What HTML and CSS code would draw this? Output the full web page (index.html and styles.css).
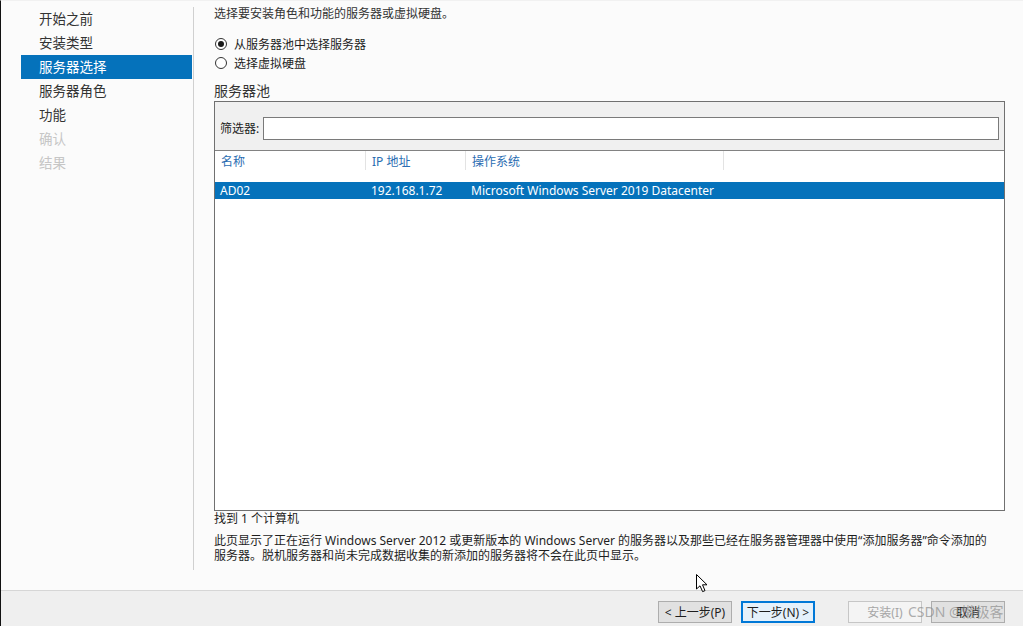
FILE: index.html
```html
<!DOCTYPE html>
<html lang="zh-CN">
<head>
  <meta charset="UTF-8" />
  <title>添加角色和功能向导</title>
  <link rel="stylesheet" href="styles.css">
</head>
<body>
  <div class="window">
    <div class="main">
      <div class="sidebar">
        <ul class="steps">
          <li>开始之前</li>
          <li>安装类型</li>
          <li class="active">服务器选择</li>
          <li>服务器角色</li>
          <li>功能</li>
          <li class="disabled">确认</li>
          <li class="disabled">结果</li>
        </ul>
      </div>

      <div class="content">
        <p class="intro">选择要安装角色和功能的服务器或虚拟硬盘。</p>
        <div class="radios">
          <label class="radio checked"><span class="dot"></span>从服务器池中选择服务器</label>
          <label class="radio"><span class="dot"></span>选择虚拟硬盘</label>
        </div>

        <h3 class="pool-title">服务器池</h3>
        <div class="pool">
          <div class="filter">
            <span class="filter-label">筛选器:</span>
            <div class="filter-input"></div>
          </div>
          <div class="grid head">
            <div class="cell">名称</div>
            <div class="cell">IP 地址</div>
            <div class="cell">操作系统</div>
            <div class="cell last"></div>
          </div>
          <div class="grid row selected">
            <div class="cell">AD02</div>
            <div class="cell">192.168.1.72</div>
            <div class="cell">Microsoft Windows Server 2019 Datacenter</div>
            <div class="cell"></div>
          </div>
        </div>

        <p class="found">找到 1 个计算机</p>
        <p class="note">此页显示了正在运行 Windows Server 2012 或更新版本的 Windows Server 的服务器以及那些已经在服务器管理器中使用“添加服务器”命令添加的<br>服务器。脱机服务器和尚未完成数据收集的新添加的服务器将不会在此页中显示。</p>
      </div>
    </div>

    <div class="footer">
      <button class="btn">&lt; 上一步(P)</button>
      <button class="btn primary">下一步(N) &gt;</button>
      <button class="btn disabled install">安装(I)</button>
      <button class="btn">取消</button>
    </div>

    <svg class="cursor" width="14" height="20" viewBox="0 0 14 20">
      <path d="M1.5 1.5 L1.5 16 L5 12.8 L7.6 18.6 L10 17.6 L7.5 11.8 L12 11.8 Z" fill="#fff" stroke="#000" stroke-width="1" stroke-linejoin="miter"/>
    </svg>
    <span class="watermark">CSDN @懒极客</span>
  </div>
</body>
</html>
```

FILE: styles.css
```css
* {
  box-sizing: border-box;
}
html, body {
  margin: 0;
  padding: 0;
}
body {
  font-family: "Noto Sans", "Noto Sans CJK SC", sans-serif;
  font-size: 12px;
  color: #1e1e1e;
  background: #fbfbfb;
}
.window {
  position: relative;
  width: 1023px;
  height: 626px;
  border-left: 1px solid #111;
  border-top: 1px solid #f1f1f1;
  background: #fbfbfb;
  display: flex;
  flex-direction: column;
  overflow: hidden;
}
.main {
  flex: 1;
  display: flex;
}

/* 左侧步骤 */
.sidebar {
  padding: 6px 0 20px 20px;
  display: flex;
}
.steps {
  list-style: none;
  margin: 0;
  padding: 0 1px 0 0;
  width: 173px;
  border-right: 1px solid #d0d0d0;
  font-size: 13.5px;
}
.steps li {
  height: 24px;
  line-height: 24px;
  padding-left: 18px;
  color: #333;
}
.steps li.active {
  background: #0572bb;
  color: #fff;
}
.steps li.disabled {
  color: #c6c6c6;
}

/* 右侧内容 */
.content {
  flex: 1;
  padding: 6px 18px 0 20px;
  display: flex;
  flex-direction: column;
}
.intro {
  margin: 0;
  line-height: 14px;
  color: #333;
}
.radios {
  margin-top: 13px;
  display: flex;
  flex-direction: column;
}
.radio {
  display: flex;
  align-items: center;
  height: 19px;
  color: #1e1e1e;
}
.dot {
  width: 12px;
  height: 12px;
  border: 1px solid #333;
  border-radius: 50%;
  margin: 0 7px 0 1px;
  display: flex;
  align-items: center;
  justify-content: center;
  background: #fff;
}
.radio.checked .dot::after {
  content: "";
  width: 6px;
  height: 6px;
  border-radius: 50%;
  background: #1a1a1a;
}
.pool-title {
  margin: 10px 0 1px;
  font-size: 14px;
  font-weight: normal;
  line-height: 18px;
  color: #333;
}
.pool {
  height: 410px;
  border: 1px solid #707070;
  background: #fff;
}
.filter {
  height: 49px;
  background: #f0f0f0;
  border-bottom: 1px solid #828282;
  display: flex;
  align-items: flex-start;
  padding: 15px 5px 0 5px;
}
.filter-label {
  line-height: 23px;
  margin-right: 4px;
  color: #1e1e1e;
}
.filter-input {
  flex: 1;
  height: 23px;
  border: 1px solid #7a7a7a;
  background: #fff;
}
.grid {
  display: grid;
  grid-template-columns: 151px 100px 258px 1fr;
}
.head {
  height: 19px;
  margin-bottom: 12px;
}
.head .cell {
  border-right: 1px solid #e3e3e3;
  color: #2a6db2;
  line-height: 16px;
  padding: 3px 0 0 6px;
}
.head .cell.last {
  border-right: none;
}
.row .cell {
  line-height: 17px;
  height: 17px;
  padding-left: 5px;
  white-space: nowrap;
}
.row.selected {
  background: #0572bb;
  color: #fff;
}
.found {
  margin: 0;
  line-height: 16px;
  color: #1e1e1e;
}
.note {
  margin: 6px 0 0;
  line-height: 15px;
  color: #1e1e1e;
  white-space: nowrap;
}

/* 底部按钮 */
.footer {
  height: 36px;
  border-top: 1px solid #d6d6d6;
  background: #efefef;
  display: flex;
  justify-content: flex-end;
  align-items: flex-start;
  padding: 10px 18px 0 0;
  gap: 9px;
}
.btn {
  width: 74px;
  height: 22px;
  padding: 0;
  font-family: inherit;
  font-size: 12px;
  color: #1e1e1e;
  background: #e1e1e1;
  border: 1px solid #adadad;
}
.btn.primary {
  border: 2px solid #0078d7;
  background: #e5f1fb;
}
.btn.disabled {
  color: #a6a6a6;
  background: #f4f4f4;
  border-color: #c6c6c6;
}
.btn.install {
  margin-left: 24px;
}

.cursor {
  position: absolute;
  left: 694px;
  top: 572px;
}
.watermark {
  position: absolute;
  left: 907px;
  top: 600px;
  font-size: 14px;
  color: rgba(140, 140, 140, 0.7);
  pointer-events: none;
}
```
